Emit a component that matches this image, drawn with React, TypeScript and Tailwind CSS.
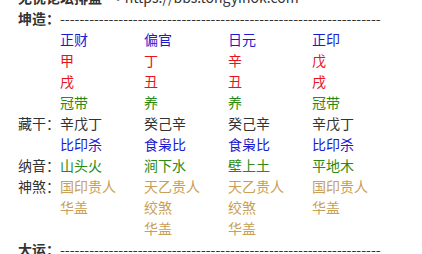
const blue = 'text-[#1a1ad0]';
const red = 'text-[#e8141c]';
const green = 'text-[#2c8a10]';
const gold = 'text-[#c9a055]';
const gray = 'text-[#333333]';

type Cell = { t: string; c: string };

const rows: { label?: string; cells: (Cell | null)[] }[] = [
  { cells: [{ t: '正财', c: blue }, { t: '偏官', c: blue }, { t: '日元', c: blue }, { t: '正印', c: blue }] },
  { cells: [{ t: '甲', c: red }, { t: '丁', c: red }, { t: '辛', c: red }, { t: '戊', c: red }] },
  { cells: [{ t: '戌', c: red }, { t: '丑', c: red }, { t: '丑', c: red }, { t: '戌', c: red }] },
  { cells: [{ t: '冠带', c: green }, { t: '养', c: green }, { t: '养', c: green }, { t: '冠带', c: green }] },
  { label: '藏干', cells: [{ t: '辛戊丁', c: gray }, { t: '癸己辛', c: gray }, { t: '癸己辛', c: gray }, { t: '辛戊丁', c: gray }] },
  { cells: [{ t: '比印杀', c: blue }, { t: '食枭比', c: blue }, { t: '食枭比', c: blue }, { t: '比印杀', c: blue }] },
  { label: '纳音', cells: [{ t: '山头火', c: green }, { t: '涧下水', c: green }, { t: '壁上土', c: green }, { t: '平地木', c: green }] },
  { label: '神煞', cells: [{ t: '国印贵人', c: gold }, { t: '天乙贵人', c: gold }, { t: '天乙贵人', c: gold }, { t: '国印贵人', c: gold }] },
  { cells: [{ t: '华盖', c: gold }, { t: '绞煞', c: gold }, { t: '绞煞', c: gold }, { t: '华盖', c: gold }] },
  { cells: [null, { t: '华盖', c: gold }, { t: '华盖', c: gold }, null] },
];

const dashes = '-'.repeat(66);

export default function App() {
  return (
    <div
      className="w-[422px] h-[254px] overflow-hidden bg-white text-[14px] leading-[21px] text-[#333333]"
      style={{ fontFamily: '"Noto Sans CJK SC", "Liberation Sans", sans-serif' }}
    >
      <div className="-mt-[13px] pl-[18px]">
        <div className="whitespace-nowrap">
          <span className="font-bold">无忧论坛排盘</span>
          <span className="ml-[10px]">-&gt;https://bbs.tongyinok.com</span>
        </div>
        <div className="whitespace-nowrap">
          <span className="font-bold">坤造：</span>
          <span>{dashes}</span>
        </div>
        {rows.map((r, i) => (
          <div key={i} className="grid grid-cols-[42px_84px_84px_84px_84px] whitespace-nowrap">
            <div>{r.label ? `${r.label}：` : ''}</div>
            {r.cells.map((c, j) => (
              <div key={j} className={c ? c.c : ''}>{c ? c.t : ''}</div>
            ))}
          </div>
        ))}
        <div className="whitespace-nowrap">
          <span className="font-bold">大运：</span>
          <span>{dashes}</span>
        </div>
      </div>
    </div>
  );
}
